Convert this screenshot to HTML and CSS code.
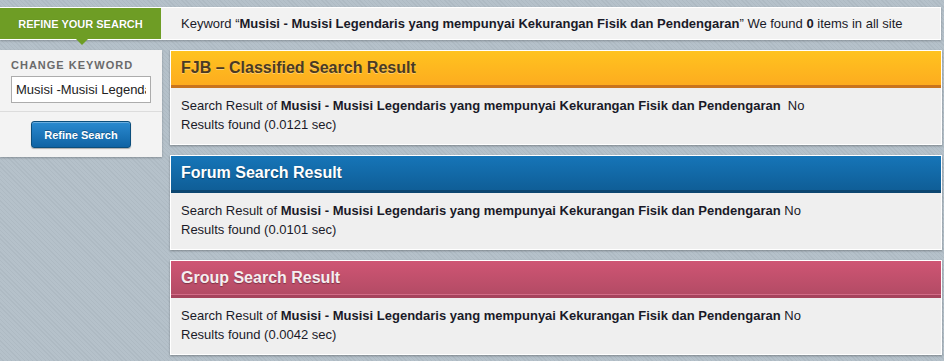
FILE: index.html
```html
<!DOCTYPE html>
<html>
<head>
<meta charset="utf-8">
<link rel="stylesheet" href="styles.css">
</head>
<body>
<div class="topbar">
  <div class="refine-tab">REFINE YOUR SEARCH<span class="tab-arrow"></span></div>
  <div class="keyword-line"><span>Keyword “<b>Musisi - Musisi Legendaris yang mempunyai Kekurangan Fisik dan Pendengaran</b>” We found <b>0</b> items in all site</span></div>
</div>
<div class="main">
  <aside class="sidebar">
    <div class="side-top">
      <div class="side-label">CHANGE KEYWORD</div>
      <input class="side-input" type="text" value="Musisi -Musisi Legendaris yang mempunyai Kekurangan Fisik dan Pendengaran">
    </div>
    <div class="side-bottom">
      <button class="refine-btn">Refine Search</button>
    </div>
  </aside>
  <section class="results">
    <div class="card">
      <div class="card-head fjb">FJB – Classified Search Result</div>
      <div class="card-body">Search Result of <b>Musisi - Musisi Legendaris yang mempunyai Kekurangan Fisik dan Pendengaran</b> &nbsp;No<br>Results found (0.0121 sec)</div>
    </div>
    <div class="card">
      <div class="card-head forum">Forum Search Result</div>
      <div class="card-body">Search Result of <b>Musisi - Musisi Legendaris yang mempunyai Kekurangan Fisik dan Pendengaran</b> No<br>Results found (0.0101 sec)</div>
    </div>
    <div class="card">
      <div class="card-head group">Group Search Result</div>
      <div class="card-body">Search Result of <b>Musisi - Musisi Legendaris yang mempunyai Kekurangan Fisik dan Pendengaran</b> No<br>Results found (0.0042 sec)</div>
    </div>
  </section>
</div>
</body>
</html>
```
FILE: styles.css
```css
html, body {
  margin: 0;
  padding: 0;
}
body {
  font-family: "Liberation Sans", Arial, sans-serif;
  font-size: 13px;
  color: #1a1a28;
  background-color: #b3bfc8;
  background-image: repeating-linear-gradient(45deg, #b5c1ca 0px, #b5c1ca 2px, #aebac3 2px, #aebac3 3px);
  height: 361px;
  overflow: hidden;
}
.topbar {
  margin: 7px 3px 0 0;
  display: flex;
  height: 31px;
  background: #f2f2f2;
  border: 1px solid #ffffff;
  border-left: 0;
  box-shadow: 0 1px 2px rgba(0,0,0,0.25);
}
.refine-tab {
  position: relative;
  width: 161px;
  background: #6e9d25;
  color: #ffffff;
  font-weight: bold;
  font-size: 11px;
  display: flex;
  align-items: center;
  justify-content: center;
  text-shadow: 0 0 1px rgba(0,0,0,0.3);
}
.tab-arrow {
  position: absolute;
  left: 76px;
  top: 31px;
  width: 0;
  height: 0;
  border-left: 6px solid transparent;
  border-right: 6px solid transparent;
  border-top: 6px solid #6e9d25;
}
.keyword-line {
  padding-left: 20px;
  display: flex;
  align-items: center;
  font-size: 13px;
  white-space: nowrap;
}
.main {
  display: flex;
  margin-top: 10px;
  gap: 8px;
  padding-right: 2px;
}
.sidebar {
  width: 162px;
  height: 107px;
  background: #f3f3f3;
  box-shadow: 0 1px 2px rgba(0,0,0,0.25);
  flex: none;
  align-self: flex-start;
}
.side-top {
  padding: 10px 11px 8px 11px;
  border-bottom: 1px solid #dcdcdc;
}
.side-label {
  font-size: 11px;
  font-weight: bold;
  color: #6a6a6a;
  letter-spacing: 1px;
  line-height: 11px;
  margin-bottom: 5px;
}
.side-input {
  box-sizing: border-box;
  width: 140px;
  height: 27px;
  border: 1px solid #acacac;
  background: #ffffff;
  font-family: "Liberation Sans", Arial, sans-serif;
  font-size: 13px;
  color: #222;
  padding: 0 4px;
  margin: 0;
  outline: none;
}
.side-bottom {
  display: flex;
  justify-content: center;
  padding-top: 9px;
}
.refine-btn {
  width: 100px;
  height: 27px;
  border: 1px solid #0b4e7c;
  border-radius: 3px;
  background: linear-gradient(#2a8ad0, #0f63a4);
  color: #ffffff;
  font-family: "Liberation Sans", Arial, sans-serif;
  font-weight: bold;
  font-size: 11px;
  box-shadow: inset 0 1px 0 rgba(255,255,255,0.3), 0 1px 1px rgba(0,0,0,0.3);
  text-shadow: 0 -1px 0 rgba(0,0,0,0.3);
  padding: 0;
}
.results {
  flex: 1;
  display: flex;
  flex-direction: column;
  gap: 10px;
}
.card {
  border: 1px solid #ffffff;
  background: #efefef;
  box-shadow: 0 1px 2px rgba(0,0,0,0.3);
}
.card-head {
  height: 34px;
  line-height: 34px;
  padding-left: 10px;
  font-size: 16px;
  font-weight: bold;
}
.card-head.fjb {
  background: linear-gradient(#ffc31f, #fdac1f);
  border-bottom: 3px solid #c9741e;
  color: #4a3a24;
  text-shadow: 0 1px 0 rgba(255,255,255,0.35);
}
.card-head.forum {
  background: linear-gradient(#1675b8, #0f5e97);
  border-bottom: 3px solid #0c4670;
  color: #ffffff;
  text-shadow: 0 1px 1px rgba(0,0,0,0.4);
}
.card-head.group {
  background: linear-gradient(#cf5574, #b04a63);
  height: 37px;
  line-height: 34px;
  color: #f6eef0;
  text-shadow: 0 1px 1px rgba(0,0,0,0.35);
  box-shadow: inset 0 -3px 0 #a6435c, inset 0 -4px 0 #d26c87;
}
.card-body {
  padding: 8px 10px 10px 10px;
  line-height: 19px;
  font-size: 13px;
}
```
